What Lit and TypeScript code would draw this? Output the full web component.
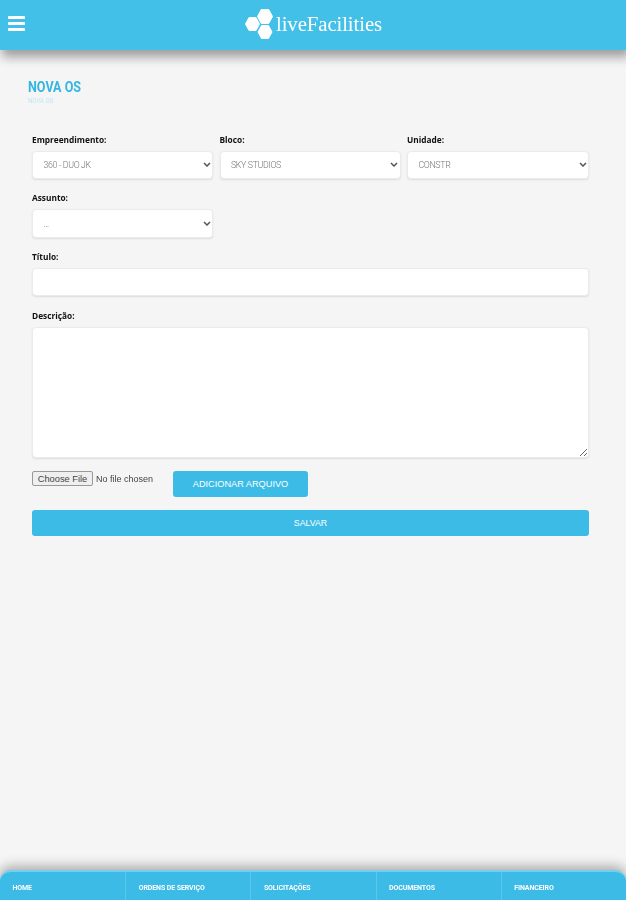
import { LitElement, html, css, svg } from "lit";
import { customElement } from "lit/decorators.js";

const hex = (cx: number, cy: number, r: number) => {
  const h = r * 0.92;
  const pts = [
    [cx - r, cy],
    [cx - r / 2, cy - h],
    [cx + r / 2, cy - h],
    [cx + r, cy],
    [cx + r / 2, cy + h],
    [cx - r / 2, cy + h],
  ]
    .map((p) => p.join(","))
    .join(" ");
  return svg`<polygon points=${pts} fill="#fff" stroke="#fff" stroke-width="1" stroke-linejoin="round"></polygon>`;
};

const sel = (value: string) => html`
  <div class="sel">
    <select><option>${value}</option></select>
    <svg class="chev" width="8" height="5" viewBox="0 0 8 5">
      <path d="M1 1l3 3 3-3" fill="none" stroke="#555" stroke-width="1.5"></path>
    </svg>
  </div>
`;

@customElement("app-root")
export class AppRoot extends LitElement {
  static styles = css`
    :host {
      display: flex;
      flex-direction: column;
      width: 626px;
      height: 900px;
      overflow: hidden;
      background: #f5f5f5;
      font-family: "Liberation Sans", Arial, sans-serif;
    }
    .top {
      flex: none;
      height: 50px;
      background: #43c0e8;
      display: flex;
      align-items: center;
      box-shadow: 3px 6px 10px 1px rgba(0, 0, 0, 0.36);
      position: relative;
      z-index: 2;
    }
    .burger {
      margin-left: 8px;
      width: 17px;
      height: 15px;
      display: flex;
      flex-direction: column;
      justify-content: space-between;
      margin-top: -3px;
    }
    .burger i {
      display: block;
      height: 3px;
      border-radius: 1px;
      background: #fff;
    }
    .logo {
      margin-left: 220px;
      display: flex;
      align-items: center;
      gap: 1px;
      margin-top: -3px;
    }
    .logo svg {
      display: block;
      filter: blur(0.3px);
    }
    .logo span {
      font-family: "Liberation Serif", serif;
      font-size: 20.8px;
      letter-spacing: -0.1px;
      color: #fff;
      filter: blur(0.4px);
    }
    main {
      flex: 1;
      padding: 29px 37px 0 32px;
      min-height: 0;
    }
    .heading {
      margin-left: -4px;
      height: 53px;
      filter: blur(0.3px);
      transform: scaleX(0.81);
      transform-origin: left;
    }
    h1 {
      margin: 0;
      font: 700 15.5px/17px "Roboto", sans-serif;
      color: #35b6e2;
    }
    .sub {
      font: 400 7.5px/9px "Roboto", sans-serif;
      color: #bfe5f3;
    }
    .row3 {
      display: grid;
      grid-template-columns: 181px 181px 182px;
      gap: 6.5px;
    }
    .field {
      display: flex;
      flex-direction: column;
    }
    label {
      height: 19px;
      font: 700 8.3px/15px "Open Sans", sans-serif;
      color: #111;
      filter: blur(0.3px);
    }
    .sel {
      position: relative;
    }
    .chev {
      position: absolute;
      right: 2.5px;
      top: calc(50% - 3px);
      pointer-events: none;
    }
    select,
    input.text,
    textarea {
      box-sizing: border-box;
      width: 100%;
      margin: 0;
      background-color: #fff;
      border: 1px solid #ebebeb;
      border-radius: 4px;
      box-shadow: 0 1px 2px rgba(0, 0, 0, 0.1);
      display: block;
      outline: none;
    }
    select {
      appearance: none;
      height: 28px;
      padding-left: 10.5px;
      font: 300 8.8px "Roboto", sans-serif;
      letter-spacing: -0.35px;
      color: #777;
      filter: blur(0.2px);
    }
    .assunto {
      margin-top: 11px;
      width: 181px;
    }
    .assunto select {
      height: 29px;
    }
    .titulo {
      margin-top: 11px;
    }
    input.text {
      height: 28px;
    }
    .desc {
      margin-top: 12px;
    }
    textarea {
      height: 131px;
      resize: vertical;
    }
    .files {
      display: flex;
      align-items: flex-start;
      margin-top: 13px;
      height: 26px;
    }
    input[type="file"] {
      width: 141px;
      font: 400 9px "Liberation Sans", sans-serif;
      color: #444;
      filter: blur(0.3px);
    }
    input[type="file"]::file-selector-button {
      height: 15px;
      width: 61px;
      padding: 0;
      margin-right: 3px;
      font: 400 9.3px "Liberation Sans", sans-serif;
      color: #444;
      background: #efefef;
      border: 1px solid #999;
      border-radius: 2px;
    }
    button {
      font: 400 9.2px "Liberation Sans", sans-serif;
      color: #fff;
      background: #3cbbe6;
      border: 0;
      border-radius: 3px;
      padding: 0;
      display: block;
    }
    .add {
      width: 135px;
      height: 26px;
    }
    .save {
      width: 557px;
      height: 26px;
      margin-top: 13px;
      font-size: 8.8px;
    }
    footer {
      flex: none;
      height: 30px;
      box-sizing: border-box;
      background: #3cbbe6;
      border-top: 2px solid #72cfee;
      border-radius: 11px 11px 0 0;
      display: flex;
      box-shadow: 0 -3px 12px 1px rgba(0, 0, 0, 0.3);
      position: relative;
    }
    footer a {
      flex: none;
      width: 125.2px;
      box-sizing: border-box;
      padding: 11px 0 0 12.5px;
      font: 700 7px/10px "Roboto", sans-serif;
      letter-spacing: -0.1px;
      color: #fff;
      border-left: 1px solid #5cc7ea;
      filter: blur(0.3px);
    }
    footer a:first-child {
      border-left: 0;
    }
  `;

  render() {
    return html`
      <header class="top">
        <div class="burger"><i></i><i></i><i></i></div>
        <div class="logo">
          <svg width="30" height="32" viewBox="0 0 30 32">
            ${hex(7.5, 16, 7)} ${hex(20, 8.5, 7.5)} ${hex(20, 24, 7)}
          </svg>
          <span>liveFacilities</span>
        </div>
      </header>
      <main>
        <div class="heading">
          <h1>NOVA OS</h1>
          <div class="sub">NOVA OS</div>
        </div>
        <div class="row3">
          <div class="field">
            <label>Empreendimento:</label>
            ${sel("360 - DUO JK")}
          </div>
          <div class="field">
            <label>Bloco:</label>
            ${sel("SKY STUDIOS")}
          </div>
          <div class="field">
            <label>Unidade:</label>
            ${sel("CONSTR")}
          </div>
        </div>
        <div class="field assunto">
          <label>Assunto:</label>
          ${sel("...")}
        </div>
        <div class="field titulo">
          <label>Título:</label>
          <input class="text" type="text" />
        </div>
        <div class="field desc">
          <label>Descrição:</label>
          <textarea></textarea>
        </div>
        <div class="files">
          <input type="file" />
          <button class="add">ADICIONAR ARQUIVO</button>
        </div>
        <button class="save">SALVAR</button>
      </main>
      <footer>
        <a>HOME</a><a>ORDENS DE SERVIÇO</a><a>SOLICITAÇÕES</a><a>DOCUMENTOS</a><a>FINANCEIRO</a>
      </footer>
    `;
  }
}
